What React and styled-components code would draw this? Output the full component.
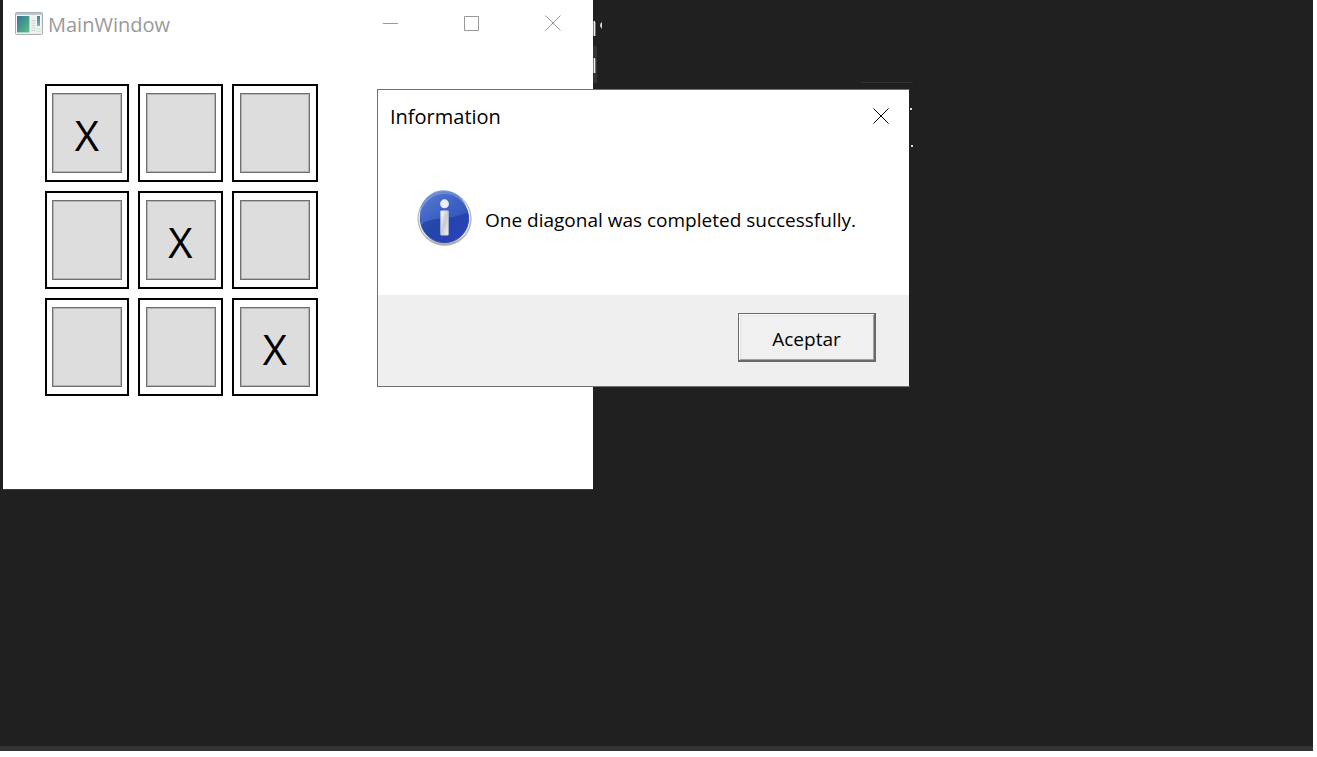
import React from "react";
import styled, { createGlobalStyle } from "styled-components";

const GlobalStyle = createGlobalStyle`
  * { box-sizing: border-box; }
  body {
    margin: 0;
    background: #fff;
    font-family: "Open Sans", "Noto Sans", sans-serif;
    color: #000;
  }
`;

const Desktop = styled.main`
  position: relative;
  height: calc(100vh - 6px);
  margin-right: 4px;
  background: #202020;
  border-bottom: 5px solid #333;
  overflow: hidden;
`;

const EditorRemains = styled.svg`
  position: absolute;
  left: 593px;
  top: 0;
`;

const AppWindow = styled.section`
  position: absolute;
  left: 3px;
  top: 0;
  width: 590px;
  background: #fff;
  padding-bottom: 93px;
  box-shadow: 0 1px 0 #3a3a3a;
`;

const TitleBar = styled.header`
  display: flex;
  align-items: center;
  height: 48px;
  padding: 0 12px 2px 12px;
`;

const AppTitle = styled.h1`
  margin: 0 auto 0 5px;
  padding-top: 3px;
  font-size: 20px;
  line-height: 28px;
  font-weight: 400;
  color: #999;
`;

const CaptionButtons = styled.div`
  display: flex;
  gap: 25px;
`;

const CaptionButton = styled.button`
  display: grid;
  place-items: center;
  width: 56px;
  height: 40px;
  padding: 0;
  border: 0;
  background: transparent;
  color: ${(p) => (p.$active ? "#000" : "#999")};
`;

const Board = styled.div`
  display: grid;
  grid-template-columns: 84px 85px 86px;
  grid-auto-rows: 98px;
  gap: 9px;
  margin: 36px 0 0 42px;
`;

const Cell = styled.div`
  display: grid;
  place-items: center;
  border: 2px solid #000;
`;

const Square = styled.button`
  width: 70px;
  height: 80px;
  padding: 4px 0 0;
  border: 1px solid #707070;
  box-shadow: inset 0 0 0 1px #b4b4b4;
  background: #ddd;
  font-family: inherit;
  font-size: 42px;
  line-height: 70px;
  color: #000;
`;

const Dialog = styled.section`
  position: absolute;
  left: 377px;
  top: 89px;
  width: 533px;
  background: #fff;
  border: 1px solid #707070;
  border-right-color: #202020;
`;

const DialogBar = styled.header`
  display: flex;
  align-items: center;
  justify-content: space-between;
  height: 51px;
  padding-left: 12px;
`;

const DialogTitle = styled.h2`
  margin: 0;
  padding-top: 2px;
  font-size: 20px;
  line-height: 28px;
  font-weight: 400;
`;

const Message = styled.div`
  display: flex;
  align-items: center;
  gap: 12px;
  height: 154px;
  padding: 0 0 0 38px;
`;

const MessageText = styled.p`
  margin: 0;
  padding-top: 4px;
  font-size: 19px;
  line-height: 28px;
  white-space: nowrap;
`;

const Actions = styled.footer`
  display: flex;
  justify-content: flex-end;
  padding: 18px 33px 24px;
  background: #efefef;
`;

const AcceptButton = styled.button`
  width: 138px;
  height: 49px;
  padding: 4px 0 0;
  border: solid #696969;
  border-width: 1px 2px 2px 1px;
  box-shadow: inset 1px 1px 0 #fff, inset -1px -1px 0 #a0a0a0, inset 2px 2px 0 #e3e3e3;
  background: #f0f0f0;
  font-family: inherit;
  font-size: 19px;
  line-height: 28px;
  color: #000;
`;

const AppIcon = () => (
  <svg width="28" height="23" viewBox="0 0 28 23" aria-hidden="true">
    <defs>
      <linearGradient id="pane" x1="0" y1="0" x2="1" y2="1">
        <stop offset="0" stopColor="#39759a" />
        <stop offset=".5" stopColor="#459b8c" />
        <stop offset="1" stopColor="#63c083" />
      </linearGradient>
      <linearGradient id="side" x1="0" y1="0" x2="0" y2="1">
        <stop offset="0" stopColor="#437fa3" />
        <stop offset="1" stopColor="#65c38c" />
      </linearGradient>
    </defs>
    <rect x=".5" y=".5" width="27" height="22" rx="1" fill="#eeeff0" stroke="#aaadb0" />
    <rect x="1" y="1" width="26" height="2" fill="#bec8d0" />
    <rect x="1.500" y="3.500" width="14" height="17.500" fill="#fff" />
    <rect x="2" y="4" width="12.500" height="16.500" fill="url(#pane)" />
    <path d="M16.500 8.500h4M16.500 11h4M16.500 13.500h4M16.500 16h4M16.500 18.500h4" stroke="#ccd1d4" />
    <rect x="21.500" y="3.500" width="4" height="11" fill="#fff" />
    <rect x="22" y="4" width="3" height="10" fill="url(#side)" />
    <path d="M21.500 17h4M21.500 19.500h4" stroke="#ddd" />
  </svg>
);

const InfoIcon = () => (
  <svg width="57" height="57" viewBox="-1 -1 58 58" aria-hidden="true">
    <defs>
      <linearGradient id="rim" x1="0" y1="0" x2="0" y2="1">
        <stop offset="0" stopColor="#bcbcbc" />
        <stop offset=".15" stopColor="#eee" />
        <stop offset=".8" stopColor="#e0e0e0" />
        <stop offset="1" stopColor="#a6a6a6" />
      </linearGradient>
      <linearGradient id="ball" x1="0" y1="0" x2="1" y2="1">
        <stop offset="0" stopColor="#3558b8" />
        <stop offset=".5" stopColor="#2445a8" />
        <stop offset="1" stopColor="#2a40c0" />
      </linearGradient>
      <linearGradient id="gloss" x1="0" y1="0" x2="1" y2="1">
        <stop offset="0" stopColor="#6086dc" />
        <stop offset="1" stopColor="#3155bf" />
      </linearGradient>
      <linearGradient id="stem" x1="0" y1="0" x2="1" y2="1">
        <stop offset="0" stopColor="#fff" />
        <stop offset=".5" stopColor="#c8cbd0" />
        <stop offset="1" stopColor="#f5f5f5" />
      </linearGradient>
    </defs>
    <circle cx="28.500" cy="29" r="27" fill="#000" opacity=".18" />
    <circle cx="28" cy="28" r="27" fill="url(#rim)" stroke="#aaa" />
    <circle cx="28" cy="28" r="24.500" fill="url(#ball)" stroke="#264aaa" />
    <path d="M4 30A24 24 0 1 1 51 22Q37 28 22 28Q11 29 4 34Z" fill="url(#gloss)" opacity=".75" />
    <circle cx="28" cy="13" r="4.500" fill="#eceef4" />
    <rect x="24" y="20" width="8" height="25" rx="1" fill="url(#stem)" stroke="#b6bfd5" strokeWidth=".7" />
  </svg>
);

const Glyph = ({ d }) => (
  <svg width="16" height="16" viewBox="0 0 16 16" fill="none" stroke="currentColor" aria-hidden="true">
    <path d={d} />
  </svg>
);

const CLOSE = "M.5 .5l15 15M15.500 .5l-15 15";

const captions = [
  { label: "Minimize", d: "M0 8.500h15" },
  { label: "Maximize", d: "M.5 1.500h14v14h-14z" },
  { label: "Close", d: CLOSE },
];

const marks = ["X", "", "", "", "X", "", "", "", "X"];

export default function App() {
  return (
    <>
      <GlobalStyle />
      <Desktop>
        <EditorRemains width="330" height="160" aria-hidden="true">
          <path d="M0 46h4v37h-4z" fill="#333" />
          <path d="M.5 21v15M.5 58v15" stroke="#5387ae" />
          <path d="M1.500 21v15M1.500 58v15" stroke="#eee" />
          <path d="M2.500 22v14M2.500 59v14" stroke="#9a602f" />
          <path d="M9 22q-4 3 0 7z" fill="#b8e1fa" />
          <path d="M268 82.500h52" stroke="#333" />
          <path d="M317 108h2v2h-2zM318 145h2v2h-2z" fill="#d5dce5" />
        </EditorRemains>
        <AppWindow>
          <TitleBar>
            <AppIcon />
            <AppTitle>MainWindow</AppTitle>
            <CaptionButtons>
              {captions.map((c) => (
                <CaptionButton key={c.label} type="button" aria-label={c.label}>
                  <Glyph d={c.d} />
                </CaptionButton>
              ))}
            </CaptionButtons>
          </TitleBar>
          <Board>
            {marks.map((mark, i) => (
              <Cell key={i}>
                <Square type="button" aria-label={`Square ${i + 1} ${mark}`}>{mark}</Square>
              </Cell>
            ))}
          </Board>
        </AppWindow>
        <Dialog role="dialog" aria-labelledby="dialog-title">
          <DialogBar>
            <DialogTitle id="dialog-title">Information</DialogTitle>
            <CaptionButton $active type="button" aria-label="Close dialog">
              <Glyph d={CLOSE} />
            </CaptionButton>
          </DialogBar>
          <Message>
            <InfoIcon />
            <MessageText>One diagonal was completed successfully.</MessageText>
          </Message>
          <Actions>
            <AcceptButton type="button">Aceptar</AcceptButton>
          </Actions>
        </Dialog>
      </Desktop>
    </>
  );
}
